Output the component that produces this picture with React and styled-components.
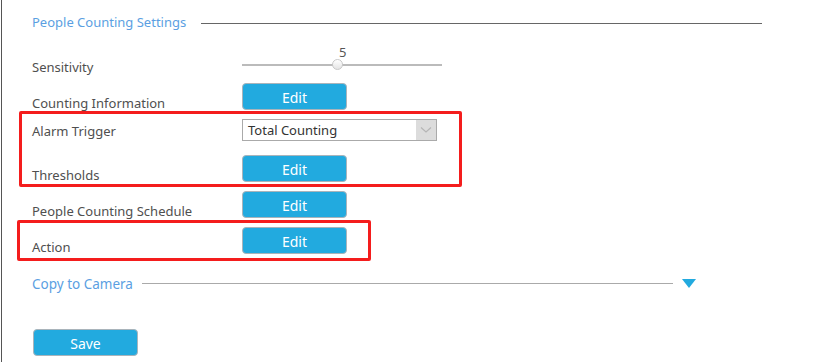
import React from 'react';
import styled, { createGlobalStyle } from 'styled-components';

const GlobalStyle = createGlobalStyle`
    html, body {
        margin: 0;
        padding: 0;
        background: #ffffff;
    }
    body {
        font-family: 'Noto Sans', 'Open Sans', Arial, sans-serif;
    }
`;

const blue = '#22aadf';
const titleBlue = '#5b9fe2';
const labelGray = '#4f4f4f';

const rows = [
    { label: 'Counting Information', type: 'edit' },
    { label: 'Alarm Trigger', type: 'select', value: 'Total Counting' },
    { label: 'Thresholds', type: 'edit' },
    { label: 'People Counting Schedule', type: 'edit' },
    { label: 'Action', type: 'edit' },
];

function Chevron() {
    return (
        <svg width='12' height='8' viewBox='0 0 12 8'>
            <path d='M1 1.5 L6 6 L11 1.5' fill='none' stroke='#b5b5b5' strokeWidth='1.2' />
        </svg>
    );
}

function Field({ row }) {
    if (row.type === 'select') {
        return (
            <Select>
                <SelectValue>{row.value}</SelectValue>
                <SelectArrow>
                    <Chevron />
                </SelectArrow>
            </Select>
        );
    }
    return <Button>Edit</Button>;
}

export default function App() {
    return (
        <Page>
            <GlobalStyle />
            <Frame>
                <Section>
                    <TitleRow>
                        <Title>People Counting Settings</Title>
                        <TitleLine />
                    </TitleRow>

                    <Rows>
                        <Row>
                            <Label $offset={12}>Sensitivity</Label>
                            <Slider>
                                <Track />
                                <Thumb style={{ left: '90px' }} />
                                <SliderValue style={{ left: '97px' }}>5</SliderValue>
                            </Slider>
                        </Row>
                        {rows.map((row) => (
                            <Row key={row.label}>
                                <Label $offset={row.type === 'select' ? 4 : 12}>{row.label}</Label>
                                <Field row={row} />
                            </Row>
                        ))}
                    </Rows>

                    <CopyRow>
                        <CopyTitle>Copy to Camera</CopyTitle>
                        <CopyLine />
                        <Triangle />
                    </CopyRow>

                    <SaveButton>Save</SaveButton>
                </Section>
            </Frame>

            <Highlight $left={19} $top={111} $width={443} $height={76} />
            <Highlight $left={17} $top={220} $width={354} $height={41} />
        </Page>
    );
}

const Page = styled.div`
    position: relative;
    width: 813px;
    height: 362px;
    overflow: hidden;
`;

const Frame = styled.div`
    margin-left: 1px;
    height: 362px;
    border-left: 1px solid #555555;
    padding: 10px 0 0 30px;
    box-sizing: border-box;
`;

const Section = styled.div`
    width: 730px;
`;

const TitleRow = styled.div`
    display: flex;
    align-items: center;
    height: 24px;
    gap: 15px;
`;

const Title = styled.div`
    font-size: 13px;
    color: ${titleBlue};
    white-space: nowrap;
`;

const TitleLine = styled.div`
    flex: 1;
    height: 1px;
    margin-top: 2px;
    background: #666666;
`;

const Rows = styled.div`
    margin-top: 13px;
    display: flex;
    flex-direction: column;
`;

const Row = styled.div`
    display: grid;
    grid-template-columns: 210px auto;
    height: 36px;
    align-items: start;
`;

const Label = styled.div`
    font-size: 13px;
    line-height: 16px;
    color: ${labelGray};
    padding-top: ${(props) => props.$offset}px;
    white-space: nowrap;
`;

const Slider = styled.div`
    position: relative;
    width: 200px;
    height: 36px;
`;

const Track = styled.div`
    position: absolute;
    left: 0;
    right: 0;
    top: 17px;
    height: 2px;
    background: #bbbbbb;
`;

const Thumb = styled.div`
    position: absolute;
    top: 12px;
    width: 11px;
    height: 11px;
    box-sizing: border-box;
    border-radius: 50%;
    border: 1px solid #c8c8c8;
    background: linear-gradient(#ffffff, #e4e4e4);
`;

const SliderValue = styled.div`
    position: absolute;
    top: -3px;
    font-size: 13px;
    line-height: 16px;
    color: #555555;
`;

const Button = styled.button`
    width: 105px;
    height: 27px;
    padding: 2px 0 0;
    box-sizing: border-box;
    border: 1px solid #a9b4bb;
    border-radius: 4px;
    background: ${blue};
    color: #ffffff;
    font-family: 'Noto Sans', 'Open Sans', Arial, sans-serif;
    font-size: 14px;
    line-height: 23px;
    cursor: pointer;
`;

const Select = styled.div`
    display: flex;
    width: 195px;
    height: 22px;
    box-sizing: border-box;
    border: 1px solid #aaaaaa;
    background: #ffffff;
`;

const SelectValue = styled.div`
    flex: 1;
    padding-left: 5px;
    font-size: 13px;
    line-height: 20px;
    color: #333333;
`;

const SelectArrow = styled.div`
    width: 20px;
    display: flex;
    align-items: center;
    justify-content: center;
    background: #dcdcdc;
`;

const CopyRow = styled.div`
    display: flex;
    align-items: center;
    width: 664px;
    height: 24px;
    margin-top: 9px;
    gap: 9px;
`;

const CopyTitle = styled.div`
    font-size: 13.5px;
    color: ${titleBlue};
    white-space: nowrap;
`;

const CopyLine = styled.div`
    flex: 1;
    height: 1px;
    margin-top: -1px;
    background: #aaaaaa;
`;

const Triangle = styled.div`
    width: 0;
    height: 0;
    margin-top: -2px;
    border-left: 7.5px solid transparent;
    border-right: 7.5px solid transparent;
    border-top: 9px solid ${blue};
`;

const SaveButton = styled(Button)`
    display: block;
    margin-top: 33px;
    margin-left: 1px;
`;

const Highlight = styled.div`
    position: absolute;
    left: ${(props) => props.$left}px;
    top: ${(props) => props.$top}px;
    width: ${(props) => props.$width}px;
    height: ${(props) => props.$height}px;
    box-sizing: border-box;
    border: 3px solid #f41d1d;
    border-radius: 2px;
    pointer-events: none;
`;
